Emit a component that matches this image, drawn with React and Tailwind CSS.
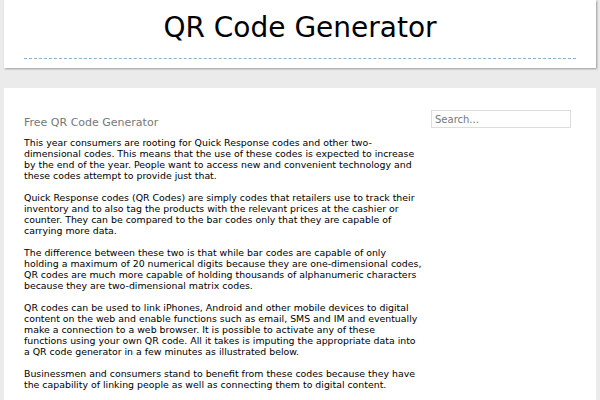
// Lines kept as they break in the page, so the wrapping matches.
const paragraphs = [
  [
    "This year consumers are rooting for Quick Response codes and other two-",
    "dimensional codes. This means that the use of these codes is expected to increase",
    "by the end of the year. People want to access new and convenient technology and",
    "these codes attempt to provide just that.",
  ],
  [
    "Quick Response codes (QR Codes) are simply codes that retailers use to track their",
    "inventory and to also tag the products with the relevant prices at the cashier or",
    "counter. They can be compared to the bar codes only that they are capable of",
    "carrying more data.",
  ],
  [
    "The difference between these two is that while bar codes are capable of only",
    "holding a maximum of 20 numerical digits because they are one-dimensional codes,",
    "QR codes are much more capable of holding thousands of alphanumeric characters",
    "because they are two-dimensional matrix codes.",
  ],
  [
    "QR codes can be used to link iPhones, Android and other mobile devices to digital",
    "content on the web and enable functions such as email, SMS and IM and eventually",
    "make a connection to a web browser. It is possible to activate any of these",
    "functions using your own QR code. All it takes is imputing the appropriate data into",
    "a QR code generator in a few minutes as illustrated below.",
  ],
  [
    "Businessmen and consumers stand to benefit from these codes because they have",
    "the capability of linking people as well as connecting them to digital content.",
  ],
];

const App = () => {
  return (
    <div className="min-h-screen bg-[#ebebeb] font-['DejaVu_Sans',sans-serif] text-black">
      <header className="mx-1 h-[68px] bg-white px-5 shadow-[1px_1px_2px_rgba(0,0,0,0.35)]">
        <h1 className="pt-[11px] text-center text-[28px] leading-[34px]">
          QR Code Generator
        </h1>
        <div className="mt-[13px] border-b border-dashed border-[#8fb0c6]"></div>
      </header>

      <main className="mx-1 mt-[20px] flex bg-white px-5 pt-[22px] pb-6">
        <section className="w-[395px] pt-[6px]">
          <h2 className="text-[11px] leading-[14px] text-[#777]">
            Free QR Code Generator
          </h2>
          <div className="mt-[7px] flex flex-col gap-[10.5px] text-[9.4px] leading-[11.1px] text-black">
            {paragraphs.map((lines, i) => (
              <p key={i} className="whitespace-nowrap">
                {lines.map((line, j) => (
                  <span key={j} className="block">
                    {line}
                  </span>
                ))}
              </p>
            ))}
          </div>
        </section>

        <aside className="ml-[12px] w-[140px]">
          <input
            type="text"
            placeholder="Search..."
            className="block h-[18px] w-full border border-[#ddd] px-[3px] text-[10px] text-[#555] placeholder:text-[#777] focus:outline-0"
          />
        </aside>
      </main>
    </div>
  );
};

export default App;
